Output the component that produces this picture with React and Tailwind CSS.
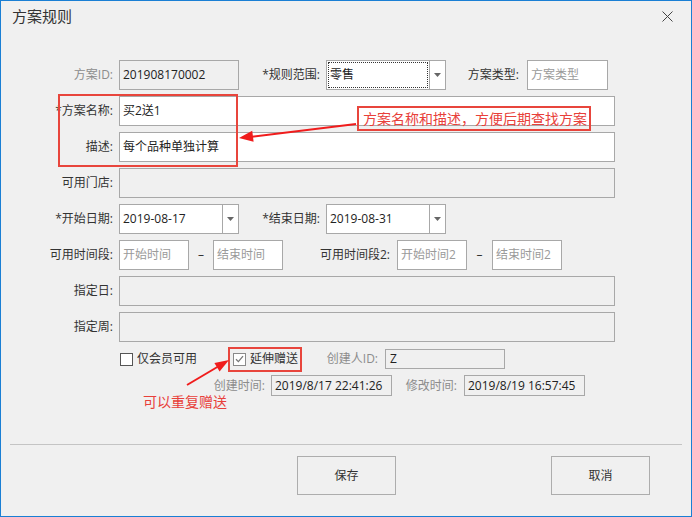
import React from 'react';

const FONT = "font-['Open_Sans','Noto_Sans_CJK_SC',sans-serif]";

function Label({ className, children }) {
  return <div className={`shrink-0 text-right text-[12px] leading-none ${className}`}>{children}</div>;
}

function Box({ className, children, placeholder }) {
  return (
    <div className={`shrink-0 h-[30px] border border-[#a8a8a8] flex items-center px-[3px] text-[12px] ${className}`}>
      {children ? <span className="text-[#222]">{children}</span> : <span className="text-[#9a9a9a]">{placeholder}</span>}
    </div>
  );
}

function Combo({ value, focused }) {
  return (
    <div className="shrink-0 w-[120px] h-[30px] border border-[#a8a8a8] bg-white flex">
      <div className="relative flex-1 flex items-center px-[3px] text-[12px] text-[#222]">
        {focused && <div className="absolute inset-[1px] border border-dotted border-[#333]" />}
        <span className="relative">{value}</span>
      </div>
      <div className="w-[16px] border-l border-[#a8a8a8] flex items-center justify-center">
        <svg width="7" height="4" viewBox="0 0 7 4"><path d="M0 0h7L3.5 4z" fill="#666" /></svg>
      </div>
    </div>
  );
}

function Check({ checked }) {
  return (
    <div className={`shrink-0 w-[13px] h-[13px] border bg-white flex items-center justify-center ${checked ? 'border-[#8a8a8a]' : 'border-[#555]'}`}>
      {checked && (
        <svg width="9" height="8" viewBox="0 0 9 8">
          <path d="M1 4.2l2.4 2.4L8 1.2" fill="none" stroke="#777" strokeWidth="1.3" />
        </svg>
      )}
    </div>
  );
}

export default function App() {
  return (
    <div className={`relative w-[692px] h-[517px] bg-[#f0f0f0] border border-[#1a7fd4] text-[#333] ${FONT}`}>
      {/* title bar */}
      <div className="h-[30px] flex items-center justify-between pl-[11px] pr-[18px]">
        <span className="text-[15px] text-[#333]">方案规则</span>
        <svg width="11" height="11" viewBox="0 0 11 11">
          <path d="M0.5 0.5l10 10M10.5 0.5l-10 10" stroke="#444" strokeWidth="1" />
        </svg>
      </div>

      <div className="pt-[29px] flex flex-col gap-[6px]">
        <div className="flex items-center">
          <Label className="w-[118px] pr-[6px] text-[#8c8c8c]">方案ID:</Label>
          <Box className="w-[120px]">201908170002</Box>
          <Label className="w-[87px] pr-[6px]">*规则范围:</Label>
          <Combo value="零售" focused />
          <Label className="w-[81px] pr-[8px]">方案类型:</Label>
          <Box className="w-[81px] bg-white" placeholder="方案类型" />
        </div>
        <div className="flex items-center">
          <Label className="w-[118px] pr-[6px]">*方案名称:</Label>
          <Box className="w-[496px] bg-white">买2送1</Box>
        </div>
        <div className="flex items-center">
          <Label className="w-[118px] pr-[6px]">描述:</Label>
          <Box className="w-[496px] bg-white">每个品种单独计算</Box>
        </div>
        <div className="flex items-center">
          <Label className="w-[118px] pr-[6px]">可用门店:</Label>
          <Box className="w-[496px]" />
        </div>
        <div className="flex items-center">
          <Label className="w-[118px] pr-[6px]">*开始日期:</Label>
          <Combo value="2019-08-17" />
          <Label className="w-[87px] pr-[6px]">*结束日期:</Label>
          <Combo value="2019-08-31" />
        </div>
        <div className="flex items-center">
          <Label className="w-[118px] pr-[6px]">可用时间段:</Label>
          <Box className="w-[70px] bg-white" placeholder="开始时间" />
          <div className="w-[24px] text-center text-[12px]">–</div>
          <Box className="w-[70px] bg-white" placeholder="结束时间" />
          <Label className="w-[114px] pr-[7px]">可用时间段2:</Label>
          <Box className="w-[70px] bg-white" placeholder="开始时间2" />
          <div className="w-[25px] text-center text-[12px]">–</div>
          <Box className="w-[70px] bg-white" placeholder="结束时间2" />
        </div>
        <div className="flex items-center">
          <Label className="w-[118px] pr-[6px]">指定日:</Label>
          <Box className="w-[496px]" />
        </div>
        <div className="flex items-center">
          <Label className="w-[118px] pr-[6px]">指定周:</Label>
          <Box className="w-[496px]" />
        </div>
      </div>

      {/* checkboxes + audit info */}
      <div className="mt-[5px] h-[24px] flex items-center pl-[119px] text-[12px]">
        <div className="w-[113px] flex items-center gap-[4px]">
          <Check />
          <span>仅会员可用</span>
        </div>
        <div className="w-[79px] flex items-center gap-[4px]">
          <Check checked />
          <span>延伸赠送</span>
        </div>
        <Label className="w-[73px] pr-[7px] text-[#8c8c8c]">创建人ID:</Label>
        <div className="w-[120px] h-[20px] border border-[#a8a8a8] flex items-center px-[4px] text-[#222]">Z</div>
      </div>
      <div className="mt-[4px] h-[21px] flex items-center pl-[118px] text-[12px]">
        <Label className="w-[152px] pr-[6px] text-[#8c8c8c]">创建时间:</Label>
        <div className="w-[121px] h-[21px] border border-[#a8a8a8] flex items-center px-[3px] text-[#222]">2019/8/17 22:41:26</div>
        <Label className="w-[72px] pr-[7px] text-[#8c8c8c]">修改时间:</Label>
        <div className="w-[121px] h-[21px] border border-[#a8a8a8] flex items-center px-[3px] text-[#222]">2019/8/19 16:57:45</div>
      </div>

      {/* footer */}
      <div className="mt-[48px] mx-[9px] border-t border-[#c4c4c4]" />
      <div className="mt-[11px] flex pl-[296px] gap-[155px]">
        <button className="w-[99px] h-[39px] border border-[#adadad] text-[12px] text-[#333]">保存</button>
        <button className="w-[99px] h-[39px] border border-[#adadad] text-[12px] text-[#333]">取消</button>
      </div>

      {/* annotations */}
      <div className="absolute left-[57px] top-[93px] w-[180px] h-[73px] border-2 border-[#e8453c]" />
      <div className="absolute left-[356px] top-[105px] w-[234px] h-[25px] border-2 border-[#e8453c] flex items-center pl-[4px] text-[14px] text-[#e8403a] whitespace-nowrap">
        方案名称和描述，方便后期查找方案
      </div>
      <div className="absolute left-[227px] top-[346px] w-[74px] h-[25px] border-2 border-[#e8453c]" />
      <div className="absolute left-[142px] top-[393px] text-[14px] leading-[16px] text-[#e8403a]">可以重复赠送</div>
      <svg className="absolute inset-0 pointer-events-none" width="690" height="515" viewBox="1 1 690 515">
        <line x1="356" y1="124" x2="250" y2="137" stroke="#f01c1c" strokeWidth="2" />
        <path d="M239 138L253.6 141.8L252.2 130.8Z" fill="#f01c1c" />
        <line x1="187" y1="385" x2="219" y2="366" stroke="#f01c1c" strokeWidth="2" />
        <path d="M229 360L219.6 371.5L214.4 362.9Z" fill="#f01c1c" />
      </svg>
    </div>
  );
}
